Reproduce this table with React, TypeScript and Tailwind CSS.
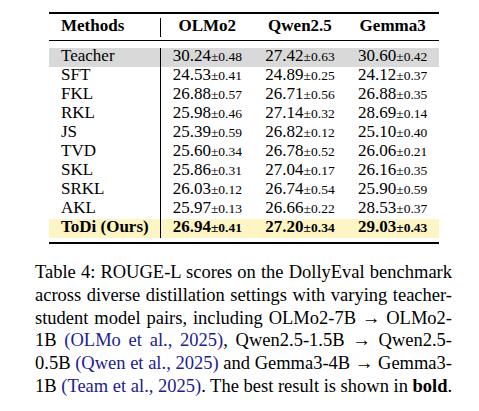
const rows: { name: string; vals: [string, string][]; tone?: 'gray' | 'yellow' }[] = [
  { name: 'Teacher', vals: [['30.24', '0.48'], ['27.42', '0.63'], ['30.60', '0.42']], tone: 'gray' },
  { name: 'SFT', vals: [['24.53', '0.41'], ['24.89', '0.25'], ['24.12', '0.37']] },
  { name: 'FKL', vals: [['26.88', '0.57'], ['26.71', '0.56'], ['26.88', '0.35']] },
  { name: 'RKL', vals: [['25.98', '0.46'], ['27.14', '0.32'], ['28.69', '0.14']] },
  { name: 'JS', vals: [['25.39', '0.59'], ['26.82', '0.12'], ['25.10', '0.40']] },
  { name: 'TVD', vals: [['25.60', '0.34'], ['26.78', '0.52'], ['26.06', '0.21']] },
  { name: 'SKL', vals: [['25.86', '0.31'], ['27.04', '0.17'], ['26.16', '0.35']] },
  { name: 'SRKL', vals: [['26.03', '0.12'], ['26.74', '0.54'], ['25.90', '0.59']] },
  { name: 'AKL', vals: [['25.97', '0.13'], ['26.66', '0.22'], ['28.53', '0.37']] },
  { name: 'ToDi (Ours)', vals: [['26.94', '0.41'], ['27.20', '0.34'], ['29.03', '0.43']], tone: 'yellow' },
]

function Cite({ children }: { children: React.ReactNode }) {
  return <span className="text-[#1c1c90]">{children}</span>
}

export default function App() {
  return (
    <div className="w-[479px] h-[411px] bg-white text-black font-['Liberation_Serif',serif] overflow-hidden">
      {/* Table */}
      <div className="ml-[49px] pt-[12px] w-[390px]">
        <div className="h-[2px] bg-black" />
        <div className="mt-[4px] h-[19px] grid grid-cols-[112px_1fr_1fr_1fr] text-[17px] leading-[15px] font-bold">
          <div className="pl-[12px] border-r border-black">Methods</div>
          <div className="text-center">OLMo2</div>
          <div className="text-center">Qwen2.5</div>
          <div className="text-center">Gemma3</div>
        </div>
        <div className="mt-[3px] h-px bg-black" />
        <div className="mt-[7px]">
          {rows.map((r) => (
            <div
              key={r.name}
              className={
                'h-[19px] grid grid-cols-[112px_1fr_1fr_1fr] text-[17px] leading-[15px] ' +
                (r.tone === 'gray' ? 'bg-[#d9d9d9] ' : r.tone === 'yellow' ? 'bg-[#fdf5c4] font-bold ' : '')
              }
            >
              <div className="pl-[12px] border-r border-black">{r.name}</div>
              {r.vals.map(([v, pm], i) => (
                <div key={i} className="text-center whitespace-nowrap">
                  {v}
                  <span className="text-[13.5px]">±{pm}</span>
                </div>
              ))}
            </div>
          ))}
        </div>
        <div className="mt-[4px] h-[2px] bg-black" />
      </div>

      {/* Caption */}
      <div className="ml-[35px] mt-[17px] w-[417px] text-[18.5px] leading-[22.8px]">
        <div className="text-justify [text-align-last:justify]">
          Table 4: ROUGE-L scores on the DollyEval benchmark
        </div>
        <div className="text-justify [text-align-last:justify]">
          across diverse distillation settings with varying teacher-
        </div>
        <div className="text-justify [text-align-last:justify]">
          student model pairs, including OLMo2-7B → OLMo2-
        </div>
        <div className="text-justify [text-align-last:justify]">
          1B <Cite>(OLMo et al., 2025)</Cite>, Qwen2.5-1.5B → Qwen2.5-
        </div>
        <div className="text-justify [text-align-last:justify]">
          0.5B <Cite>(Qwen et al., 2025)</Cite> and Gemma3-4B → Gemma3-
        </div>
        <div className="whitespace-nowrap">
          1B <Cite>(Team et al., 2025)</Cite>. The best result is shown in <b>bold</b>.
        </div>
      </div>
    </div>
  )
}
